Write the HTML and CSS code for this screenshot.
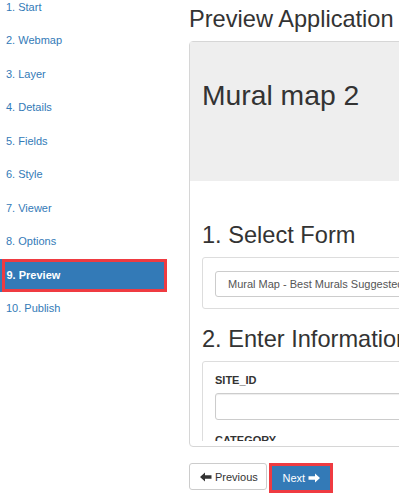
FILE: index.html
```html
<!DOCTYPE html>
<html lang="en">
<head>
    <meta charset="UTF-8">
    <meta name="viewport" content="width=device-width, initial-scale=1.0">
    <title>Preview Application</title>
    <link rel="stylesheet" href="styles.css">
</head>
<body>
    <div class="layout">
        <ul class="steps">
            <li><a href="#">1. Start</a></li>
            <li><a href="#">2. Webmap</a></li>
            <li><a href="#">3. Layer</a></li>
            <li><a href="#">4. Details</a></li>
            <li><a href="#">5. Fields</a></li>
            <li><a href="#">6. Style</a></li>
            <li><a href="#">7. Viewer</a></li>
            <li><a href="#">8. Options</a></li>
            <li><a href="#" class="active">9. Preview</a></li>
            <li><a href="#">10. Publish</a></li>
        </ul>

        <div class="main">
            <h2 class="page-title">Preview Application</h2>

            <div class="frame">
                <div class="frame-view">
                    <div class="jumbotron">
                        <h1>Mural map 2</h1>
                    </div>

                    <div class="container">
                        <h2 class="section-title first">1. Select Form</h2>
                        <div class="panel panel-form">
                            <div class="select">Mural Map - Best Murals Suggested by the Public</div>
                        </div>

                        <h2 class="section-title">2. Enter Information</h2>
                        <div class="panel panel-fields">
                            <div class="form-group">
                                <label>SITE_ID</label>
                                <div class="input"></div>
                            </div>
                            <div class="form-group">
                                <label>CATEGORY</label>
                                <div class="input"></div>
                            </div>
                        </div>
                    </div>
                </div>
            </div>

            <div class="buttons">
                <button class="btn btn-default">
                    <svg class="arrow" width="12" height="10" viewBox="0 0 12 10"><path d="M0 5 L5 0.5 L5 3.3 L11.5 3.3 L11.5 6.7 L5 6.7 L5 9.5 Z" fill="#333"/></svg>
                    Previous
                </button>
                <button class="btn btn-next">
                    Next
                    <svg class="arrow" width="12" height="10" viewBox="0 0 12 10"><path d="M12 5 L7 0.5 L7 3.3 L0.5 3.3 L0.5 6.7 L7 6.7 L7 9.5 Z" fill="#fff"/></svg>
                </button>
            </div>
        </div>
    </div>
</body>
</html>
```

FILE: styles.css
```css
html, body {
    overflow: hidden;
}

body {
    margin: 0;
    font-family: "Liberation Sans", Arial, sans-serif;
    color: #333;
    background: #fff;
}

.layout {
    display: grid;
    grid-template-columns: 167px 560px;
    column-gap: 22px;
}

/* Wizard steps */
.steps {
    list-style: none;
    margin: -9.25px 0 0;
    padding: 0;
}

.steps a {
    display: block;
    box-sizing: border-box;
    height: 33.5px;
    line-height: 33.5px;
    padding-left: 6px;
    font-size: 11px;
    color: #337ab7;
    text-decoration: none;
}

.steps a.active {
    margin-left: 2px;
    height: 33.5px;
    line-height: 27.5px;
    padding-left: 1.5px;
    border: 3px solid #ef3b41;
    background: #337ab7;
    color: #fff;
    font-weight: bold;
    box-shadow: -2px 0 0 #337ab7;
}

/* Main column */
.page-title {
    margin: 5.7px 0 9.3px;
    font-size: 23.6px;
    line-height: 26px;
    font-weight: normal;
}

.frame {
    border: 1px solid #d6d6d6;
    border-radius: 4px;
    padding-bottom: 5px;
}

.frame-view {
    height: 399px;
    overflow: hidden;
}

.jumbotron {
    background: #eee;
    height: 139px;
    box-sizing: border-box;
    padding: 38px 12px 0;
}

.jumbotron h1 {
    margin: 0;
    font-size: 28.3px;
    line-height: 31px;
    font-weight: normal;
}

.container {
    padding: 0 12px;
}

.section-title {
    margin: 16.7px 0 9px;
    font-size: 23.6px;
    line-height: 26px;
    font-weight: normal;
}

.section-title.first {
    margin-top: 41.4px;
    margin-bottom: 8.6px;
}

.panel {
    border: 1px solid #ddd;
    border-radius: 3px;
}

.panel-form {
    padding: 13px 12px 11px;
}

.select {
    box-sizing: border-box;
    height: 26px;
    line-height: 24px;
    padding: 0 12px;
    border: 1px solid #ccc;
    border-radius: 3px;
    font-size: 11px;
    color: #555;
    white-space: nowrap;
    overflow: hidden;
}

.panel-fields {
    padding: 11.5px 12px 0;
}

.form-group {
    margin-bottom: 12.7px;
}

.form-group label {
    display: block;
    margin-bottom: 4px;
    font-size: 11px;
    line-height: 15.7px;
    font-weight: bold;
}

.input {
    box-sizing: border-box;
    height: 27.5px;
    border: 1px solid #ccc;
    border-radius: 3px;
    box-shadow: inset 0 1px 1px rgba(0, 0, 0, 0.075);
}

/* Bottom buttons */
.buttons {
    display: flex;
    align-items: flex-start;
    gap: 2px;
    margin-top: 16px;
}

.btn {
    display: flex;
    align-items: center;
    gap: 3px;
    box-sizing: border-box;
    font-family: "Liberation Sans", Arial, sans-serif;
    font-size: 11px;
    cursor: pointer;
    border-radius: 3px;
}

.btn-default {
    width: 78px;
    height: 27.5px;
    padding: 0 0 0 10px;
    background: #fff;
    border: 1px solid #ccc;
    color: #333;
}

.btn-next {
    width: 64px;
    height: 30px;
    padding: 0 0 0 10.5px;
    background: #337ab7;
    border: 3px solid #ef3b41;
    border-radius: 0;
    color: #fff;
}

.arrow {
    display: block;
}
```
